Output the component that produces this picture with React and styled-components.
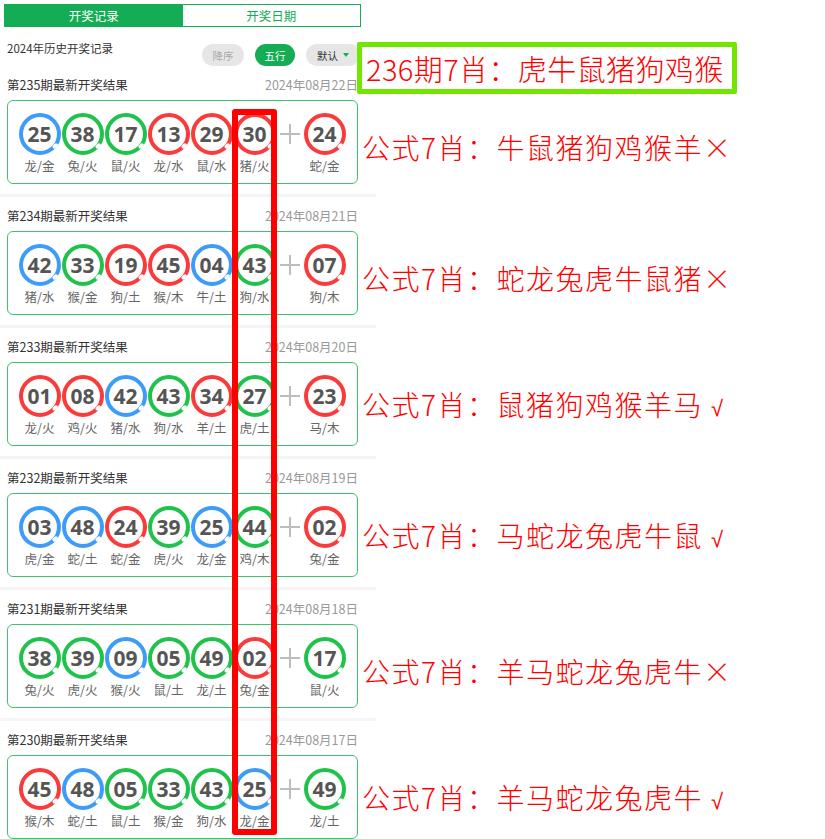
import React from "react";
import styled, { createGlobalStyle } from "styled-components";

const GlobalStyle = createGlobalStyle`
  html, body { margin: 0; padding: 0; background: #fff; }
  body { font-family: "Noto Sans CJK SC", "Noto Sans", sans-serif; }
`;

const CJK = `"Noto Sans CJK SC", "Noto Sans", sans-serif`;
const GREEN = "#14ad55";

const Page = styled.div`
  position: relative;
  width: 825px;
  min-height: 839px;
  font-family: ${CJK};
`;

const Header = styled.div`
  width: 376px;
`;

const Tabs = styled.div`
  display: flex;
  margin: 4px 15px 0 4px;
  height: 23px;
  box-sizing: border-box;
  border: 1px solid ${GREEN};
`;

const Tab = styled.div`
  flex: 1;
  display: flex;
  align-items: center;
  justify-content: center;
  font-size: 12.5px;
  background: ${(p) => (p.$active ? GREEN : "#fff")};
  color: ${(p) => (p.$active ? "#fff" : GREEN)};
`;

const Toolbar = styled.div`
  display: flex;
  align-items: flex-start;
  height: 39px;
  box-sizing: border-box;
  padding: 12px 16px 0 7px;
`;

const ToolbarTitle = styled.div`
  font-size: 11.5px;
  line-height: 18px;
  color: #333;
`;

const ButtonGroup = styled.div`
  margin-left: auto;
  margin-top: 5px;
  display: flex;
  gap: 11px;
`;

const Pill = styled.div`
  height: 22px;
  border-radius: 11px;
  padding: 0 ${(p) => p.$pad || 10}px;
  display: flex;
  align-items: center;
  gap: 5px;
  font-size: 10.5px;
  background: ${(p) =>
    p.$variant === "primary" ? GREEN : "#e6e6e6"};
  color: ${(p) =>
    p.$variant === "primary"
      ? "#fff"
      : p.$variant === "muted"
      ? "#aaa"
      : "#333"};
`;

const Caret = styled.span`
  width: 0;
  height: 0;
  border-left: 3px solid transparent;
  border-right: 3px solid transparent;
  border-top: 4px solid ${GREEN};
`;

const Row = styled.div`
  display: grid;
  grid-template-columns: 376px 1fr;
`;

const Section = styled.div`
  box-sizing: border-box;
  padding: 9px 18px 10px 7px;
  border-top: ${(p) => (p.$first ? "none" : "3px solid #f5f5f5")};
`;

const SectionHead = styled.div`
  display: flex;
  align-items: center;
  justify-content: space-between;
  height: 18px;
  margin-bottom: 7px;
`;

const IssueTitle = styled.div`
  font-size: 12.5px;
  color: #333;
`;

const IssueDate = styled.div`
  font-size: 12.5px;
  color: #999;
`;

const Card = styled.div`
  box-sizing: border-box;
  height: 84px;
  border: 1px solid #3cc46c;
  border-radius: 6px;
  padding: 12px 10px 0 10px;
  display: flex;
  align-items: flex-start;
`;

const BallItem = styled.div`
  width: 43px;
  display: flex;
  flex-direction: column;
  align-items: center;
`;

const RING = {
  red: "#f93b3b",
  blue: "#3d9cf9",
  green: "#1fc34b",
};

const Ball = styled.div`
  position: relative;
  width: 42px;
  height: 42px;
  box-sizing: border-box;
  border-radius: 50%;
  border: 4.5px solid ${(p) => RING[p.$color]};
  background: radial-gradient(circle at 40% 35%, #ffffff 55%, #f1f1f1 100%);
  display: flex;
  align-items: center;
  justify-content: center;
  font-family: "Noto Sans", "Open Sans", sans-serif;
  font-weight: 700;
  font-size: 21px;
  color: #555;

  &::after {
    content: "";
    position: absolute;
    right: -1px;
    bottom: 4px;
    width: 6px;
    height: 3.5px;
    border-radius: 50%;
    background: #fff;
    transform: rotate(-45deg);
  }
`;

const BallLabel = styled.div`
  margin-top: 2px;
  font-size: 12.5px;
  line-height: 17px;
  color: #666;
`;

const PlusSlot = styled.div`
  width: 27px;
  height: 42px;
  display: flex;
  align-items: center;
  justify-content: center;
`;

const Formula = styled.div`
  margin-left: -14px;
  align-self: end;
  padding-bottom: 29px;
  font-size: 28px;
  line-height: 36px;
  letter-spacing: 1.5px;
  color: #ff0000;
  white-space: nowrap;
  font-weight: 300;
`;

const Mark = styled.span`
  font-family: ${(p) =>
    p.$ok ? `"DejaVu Sans", "Liberation Sans", sans-serif` : CJK};
  font-size: ${(p) => (p.$ok ? 22 : 28)}px;
  margin-left: ${(p) => (p.$ok ? 8 : 0)}px;
`;

const Highlight = styled.div`
  position: absolute;
  left: 357px;
  top: 38px;
  width: 380px;
  height: 52px;
  box-sizing: border-box;
  border: 5px solid #72e600;
  border-radius: 2px;
  background: #fff;
  display: flex;
  align-items: center;
  padding-left: 4px;
  font-size: 29px;
  letter-spacing: 0.4px;
  color: #ff0000;
  white-space: nowrap;
  font-weight: 300;
`;

const ColumnMark = styled.div`
  position: absolute;
  left: 232px;
  top: 105px;
  width: 45px;
  height: 726px;
  box-sizing: border-box;
  border: 6px solid #ff0000;
  border-radius: 3px;
  pointer-events: none;
`;

const RED = [1, 2, 7, 8, 12, 13, 18, 19, 23, 24, 29, 30, 34, 35, 40, 45, 46];
const BLUE = [3, 4, 9, 10, 14, 15, 20, 25, 26, 31, 36, 37, 41, 42, 47, 48];
const colorOf = (n) => (RED.includes(n) ? "red" : BLUE.includes(n) ? "blue" : "green");

const parse = (s) =>
  s.split(" ").map((t) => {
    const [num, label] = t.split(":");
    return { num, label };
  });

const DRAWS = [
  {
    issue: 235,
    date: "2024年08月22日",
    balls: parse("25:龙/金 38:兔/火 17:鼠/火 13:龙/水 29:鼠/水 30:猪/火 24:蛇/金"),
    zodiac: "牛鼠猪狗鸡猴羊",
    ok: false,
  },
  {
    issue: 234,
    date: "2024年08月21日",
    balls: parse("42:猪/水 33:猴/金 19:狗/土 45:猴/木 04:牛/土 43:狗/水 07:狗/木"),
    zodiac: "蛇龙兔虎牛鼠猪",
    ok: false,
  },
  {
    issue: 233,
    date: "2024年08月20日",
    balls: parse("01:龙/火 08:鸡/火 42:猪/水 43:狗/水 34:羊/土 27:虎/土 23:马/木"),
    zodiac: "鼠猪狗鸡猴羊马",
    ok: true,
  },
  {
    issue: 232,
    date: "2024年08月19日",
    balls: parse("03:虎/金 48:蛇/土 24:蛇/金 39:虎/火 25:龙/金 44:鸡/木 02:兔/金"),
    zodiac: "马蛇龙兔虎牛鼠",
    ok: true,
  },
  {
    issue: 231,
    date: "2024年08月18日",
    balls: parse("38:兔/火 39:虎/火 09:猴/火 05:鼠/土 49:龙/土 02:兔/金 17:鼠/火"),
    zodiac: "羊马蛇龙兔虎牛",
    ok: false,
  },
  {
    issue: 230,
    date: "2024年08月17日",
    balls: parse("45:猴/木 48:蛇/土 05:鼠/土 33:猴/金 43:狗/水 25:龙/金 49:龙/土"),
    zodiac: "羊马蛇龙兔虎牛",
    ok: true,
  },
];

function BallCell({ num, label }) {
  return (
    <BallItem>
      <Ball $color={colorOf(parseInt(num, 10))}>{num}</Ball>
      <BallLabel>{label}</BallLabel>
    </BallItem>
  );
}

function Plus() {
  return (
    <PlusSlot>
      <svg width="22" height="22" viewBox="0 0 22 22">
        <path d="M11 1v20M1 11h20" stroke="#bdbdbd" strokeWidth="2" fill="none" />
      </svg>
    </PlusSlot>
  );
}

export default function App() {
  return (
    <Page>
      <GlobalStyle />
      <Header>
        <Tabs>
          <Tab $active>开奖记录</Tab>
          <Tab>开奖日期</Tab>
        </Tabs>
        <Toolbar>
          <ToolbarTitle>2024年历史开奖记录</ToolbarTitle>
          <ButtonGroup>
            <Pill $variant="muted" $pad={10.5}>降序</Pill>
            <Pill $variant="primary" $pad={9.5}>五行</Pill>
            <Pill $pad={11}>
              默认
              <Caret />
            </Pill>
          </ButtonGroup>
        </Toolbar>
      </Header>

      {DRAWS.map((d, i) => (
        <Row key={d.issue}>
          <Section $first={i === 0}>
            <SectionHead>
              <IssueTitle>第{d.issue}期最新开奖结果</IssueTitle>
              <IssueDate>{d.date}</IssueDate>
            </SectionHead>
            <Card>
              {d.balls.slice(0, 6).map((b, j) => (
                <BallCell key={j} {...b} />
              ))}
              <Plus />
              <BallCell {...d.balls[6]} />
            </Card>
          </Section>
          <Formula>
            公式7肖：{d.zodiac}
            <Mark $ok={d.ok}>{d.ok ? "√" : "×"}</Mark>
          </Formula>
        </Row>
      ))}

      <Highlight>236期7肖：虎牛鼠猪狗鸡猴</Highlight>
      <ColumnMark />
    </Page>
  );
}
